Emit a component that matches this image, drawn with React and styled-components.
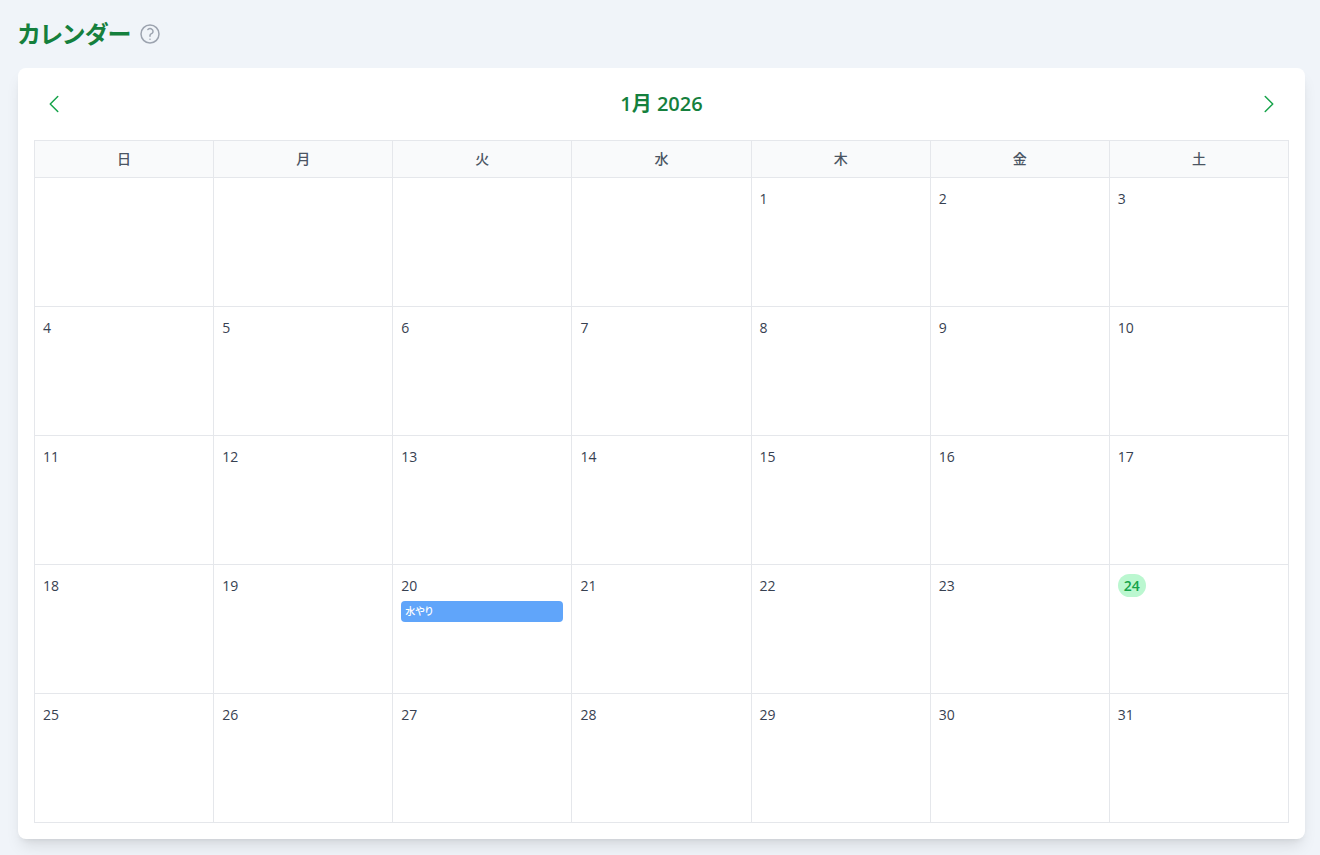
import React, { useState } from 'react';
import styled, { createGlobalStyle } from 'styled-components';

const WEEKDAYS = ['日', '月', '火', '水', '木', '金', '土'];
const TODAY = '2026-1-24';
const EVENTS = {
  '2026-1-20': [{ id: 1, title: '水やり' }],
};

const getWeeks = (year, month) => {
  const offset = new Date(year, month - 1, 1).getDay();
  const total = new Date(year, month, 0).getDate();
  const weeks = [];

  for (let start = 1 - offset; start <= total; start += 7) {
    weeks.push(
      WEEKDAYS.map((_, i) => {
        const day = start + i;
        return day >= 1 && day <= total ? day : null;
      })
    );
  }

  return weeks;
};

const Icon = ({ d }) => (
  <Svg viewBox="0 0 24 24" aria-hidden="true">
    <path d={d} />
  </Svg>
);

const App = () => {
  const [current, setCurrent] = useState({ year: 2026, month: 1 });
  const { year, month } = current;

  const moveMonth = (step) => {
    const next = new Date(year, month - 1 + step, 1);
    setCurrent({ year: next.getFullYear(), month: next.getMonth() + 1 });
  };

  return (
    <>
      <GlobalStyle />
      <Page>
        <PageHeader>
          <Title>カレンダー</Title>
          <HelpButton type="button" aria-label="ヘルプ">
            <Icon d="M9.879 7.519c1.171-1.025 3.071-1.025 4.242 0 1.172 1.025 1.172 2.687 0 3.712-.203.179-.43.326-.67.442-.745.361-1.45.999-1.45 1.827v.75M21 12a9 9 0 1 1-18 0 9 9 0 0 1 18 0Zm-9 5.25h.008v.008H12v-.008Z" />
          </HelpButton>
        </PageHeader>

        <Card>
          <MonthNav>
            <NavButton type="button" aria-label="前の月" onClick={() => moveMonth(-1)}>
              <Icon d="M15.75 19.5 8.25 12l7.5-7.5" />
            </NavButton>
            <MonthTitle>
              {month}月 {year}
            </MonthTitle>
            <NavButton type="button" aria-label="次の月" onClick={() => moveMonth(1)}>
              <Icon d="m8.25 4.5 7.5 7.5-7.5 7.5" />
            </NavButton>
          </MonthNav>

          <Table>
            <thead>
              <tr>
                {WEEKDAYS.map((name) => (
                  <Weekday key={name} scope="col">
                    {name}
                  </Weekday>
                ))}
              </tr>
            </thead>
            <tbody>
              {getWeeks(year, month).map((week, i) => (
                <tr key={i}>
                  {week.map((day, j) => {
                    const key = `${year}-${month}-${day}`;
                    return (
                      <DayCell key={j}>
                        {day && (
                          <DateLine>
                            <DateNumber $today={key === TODAY}>{day}</DateNumber>
                          </DateLine>
                        )}
                        {(EVENTS[key] || []).map((event) => (
                          <EventButton type="button" key={event.id}>
                            {event.title}
                          </EventButton>
                        ))}
                      </DayCell>
                    );
                  })}
                </tr>
              ))}
            </tbody>
          </Table>
        </Card>
      </Page>
    </>
  );
};

export default App;

const GlobalStyle = createGlobalStyle`
  *, *::before, *::after {
    box-sizing: border-box;
  }

  body {
    margin: 0;
    background-color: #f0f4f9;
    color: #374151;
    font-family: 'Open Sans', 'Noto Sans CJK JP', sans-serif;
    font-feature-settings: 'palt';
  }
`;

const Page = styled.main`
  padding: 16px 15px 16px 18px;
`;

const PageHeader = styled.header`
  display: flex;
  align-items: center;
  gap: 7px;
  margin-bottom: 16px;
`;

const Title = styled.h1`
  margin: 0;
  color: #15803d;
  font-size: 24px;
  line-height: 36px;
  font-weight: 700;
`;

const Svg = styled.svg`
  display: block;
  width: 24px;
  height: 24px;
  fill: none;
  stroke: currentColor;
  stroke-width: 1.5;
  stroke-linecap: round;
  stroke-linejoin: round;
`;

const Button = styled.button`
  border: 0;
  padding: 0;
  background: none;
  font-family: inherit;
  font-feature-settings: inherit;
  cursor: pointer;
`;

const HelpButton = styled(Button)`
  color: #9ca3af;
`;

const Card = styled.section`
  padding: 16px;
  background-color: #ffffff;
  border-radius: 8px;
  box-shadow: 0 10px 15px -3px rgba(0, 0, 0, 0.1), 0 4px 6px -4px rgba(0, 0, 0, 0.1);
`;

const MonthNav = styled.div`
  display: flex;
  justify-content: space-between;
  align-items: center;
  margin-bottom: 16px;
`;

const NavButton = styled(Button)`
  padding: 8px;
  border-radius: 50%;
  color: #16a34a;

  &:hover {
    background-color: #dcfce7;
  }
`;

const MonthTitle = styled.h2`
  margin: 0;
  color: #15803d;
  font-size: 20px;
  line-height: 28px;
  font-weight: 600;
`;

const Table = styled.table`
  width: 100%;
  table-layout: fixed;
  border-collapse: collapse;
`;

const Weekday = styled.th`
  padding: 8px;
  border: 1px solid #e5e7eb;
  background-color: #f9fafb;
  color: #4b5563;
  font-size: 14px;
  line-height: 20px;
  font-weight: 500;
`;

const DayCell = styled.td`
  height: 129px;
  padding: 8px;
  border: 1px solid #e5e7eb;
  vertical-align: top;
`;

const DateLine = styled.div`
  display: flex;
  align-items: center;
  height: 24px;
  font-size: 14px;
`;

const DateNumber = styled.span`
  line-height: 23px;
  ${({ $today }) =>
    $today &&
    `
    padding: 0 6px;
    border-radius: 12px;
    background-color: #bbf7d0;
    color: #16a34a;
    font-weight: 600;
  `}
`;

const EventButton = styled(Button)`
  display: block;
  width: 100%;
  margin-top: 4px;
  padding: 3px 4px;
  overflow: hidden;
  border-radius: 4px;
  background-color: #60a5fa;
  color: #ffffff;
  font-size: 10px;
  line-height: 15px;
  font-weight: 500;
  text-align: left;
  text-overflow: ellipsis;
  white-space: nowrap;
`;
